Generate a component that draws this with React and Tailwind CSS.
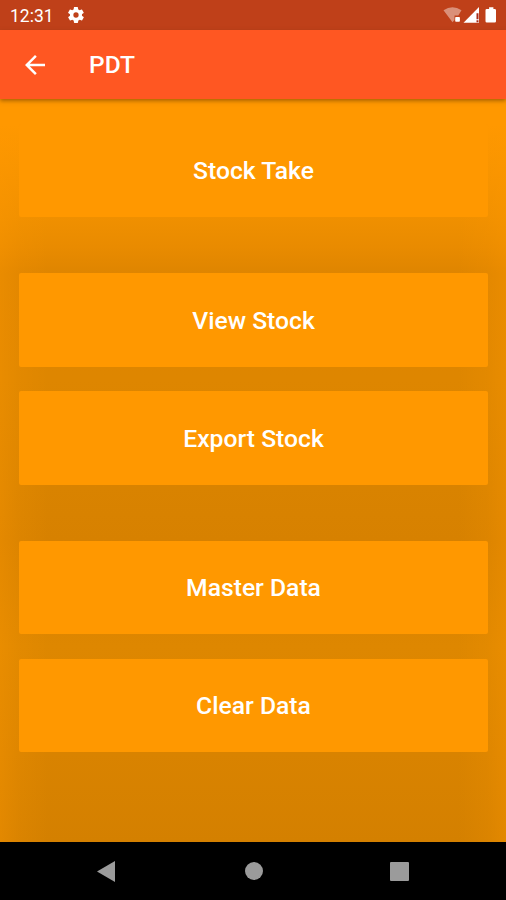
import React from "react";

const GROUPS = [["Stock Take"], ["View Stock", "Export Stock"], ["Master Data", "Clear Data"]];

function StatusBar() {
  return (
    <div className="flex h-[30px] shrink-0 items-center justify-between bg-[#bf4019] pl-[10px] pr-[8px] text-white">
      <div className="flex items-center gap-[15px]">
        <span className="w-[43px] whitespace-nowrap pt-[2px] text-[17.5px] leading-5">12:31</span>
        <svg viewBox="2 2 20 20" className="h-4 w-4" fill="currentColor">
          <path d="M19.4 13c0-.3.1-.6.1-1s0-.7-.1-1l2.1-1.6c.2-.2.2-.4.1-.6l-2-3.5c-.1-.2-.4-.3-.6-.2l-2.5 1a7 7 0 0 0-1.7-1l-.4-2.6a.5.5 0 0 0-.5-.5h-4c-.2 0-.4.2-.5.5L9 5.100a7 7 0 0 0-1.700 1l-2.500-1c-.2-.1-.5 0-.6.2l-2 3.500c-.1.2 0 .5.100.6L4.500 11a8 8 0 0 0 0 2l-2.100 1.600c-.2.2-.2.4-.1.6l2 3.500c.1.2.4.3.6.2l2.500-1a7 7 0 0 0 1.700 1l.4 2.600c0 .3.200.5.500.5h4c.2 0 .4-.2.500-.5l.4-2.600a7 7 0 0 0 1.700-1l2.500 1c.2.1.5 0 .6-.2l2-3.500c.1-.2 0-.5-.1-.6zM12 15.300a3.300 3.300 0 1 1 0-6.600 3.300 3.300 0 0 1 0 6.600z" />
        </svg>
      </div>
      <svg viewBox="0 0 56 20" className="h-5 w-14" fill="white">
        <path d="M1.500 5.200Q10.500-.5 19.500 5.200L16.300 10.500H12.500V15L10.500 17.300Z" fillOpacity=".42" />
        <rect x="13.200" y="12" width="4.700" height="4.700" rx=".8" />
        <path d="M21.500 17.800L37 2V17.800Z" />
        <path d="M34.500 8.200h2v6h-2zM34.500 15.200h2v2h-2z" fill="#a92b18" />
        <path d="M44.800 4h2.300V2.200h4.300V4h1.300q1.300 0 1.300 1.300v11q0 1.300-1.300 1.300h-7.900q-1.300 0-1.300-1.300v-11Q43.500 4 44.800 4Z" />
      </svg>
    </div>
  );
}

function AppBar() {
  return (
    <header className="z-10 flex h-[69px] shrink-0 items-center bg-[#ff5722] pl-[25px] text-white shadow-[0_2px_4px_rgba(90,50,0,0.5)]">
      <svg viewBox="4 4 16 16" className="h-5 w-5" fill="currentColor" role="img" aria-label="Back">
        <path d="M20 11H7.830l5.590-5.590L12 4l-8 8 8 8 1.410-1.410L7.830 13H20z" />
      </svg>
      <h1 className="ml-[44px] text-[24.500px] font-medium leading-7">PDT</h1>
    </header>
  );
}

function NavigationBar() {
  return (
    <nav className="flex h-[58px] shrink-0 items-center justify-between bg-black pl-[97px] pr-[97px] text-[#9b9b9b]">
      <svg viewBox="0 0 18 21" className="h-[21px] w-[18px]" fill="currentColor">
        <path d="M18 0V21L0 10.500Z" />
      </svg>
      <div className="ml-[2px] h-[18px] w-[18px] rounded-full bg-[#9b9b9b]" />
      <div className="h-[19px] w-[19px] rounded-[1px] bg-[#9b9b9b]" />
    </nav>
  );
}

export default function App() {
  return (
    <div className="flex h-[900px] w-[506px] flex-col overflow-hidden bg-black font-['Roboto','Liberation_Sans',sans-serif]">
      <StatusBar />
      <AppBar />
      <main className="flex-1 bg-[linear-gradient(90deg,rgba(255,152,0,.34),rgba(255,152,0,.15)_19px,transparent_48px,transparent_458px,rgba(255,152,0,.15)_487px,rgba(255,152,0,.34)),linear-gradient(180deg,#ff9800_0px,#ff9800_26px,#f09000_118px,#e98b00_148px,#df8500_174px,#de8600_280px,#d98300_388px,#d78100_442px,#de8700_548px,#d98300_654px,#d48000_743px)]">
        <div className="flex flex-col gap-14 pl-[19px] pr-[18px] pt-[24.500px]">
          {GROUPS.map((items) => (
            <div key={items[0]} className="flex flex-col gap-[24.500px]">
              {items.map((label) => (
                <button
                  key={label}
                  className="h-[93.500px] rounded-[2px] bg-[#ff9800] pt-[2px] text-[24.700px] font-medium leading-7 text-white"
                >
                  {label}
                </button>
              ))}
            </div>
          ))}
        </div>
      </main>
      <NavigationBar />
    </div>
  );
}
